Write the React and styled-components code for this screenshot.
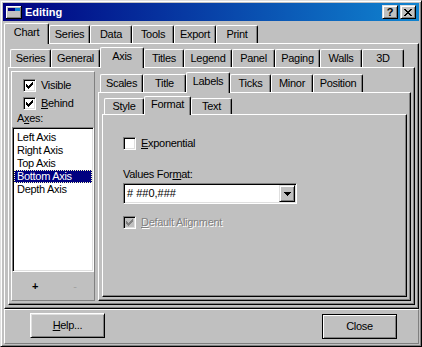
import React from "react";
import styled, { createGlobalStyle, css } from "styled-components";

const FACE = "#c0c0c0";
const LIGHT = "#dfdfdf";
const SHADOW = "#808080";
const DARK = "#000000";
const HI = "#ffffff";

const Global = createGlobalStyle`
  html, body { margin: 0; padding: 0; background: ${FACE}; }
  body {
    font-family: "Liberation Sans", Arial, sans-serif;
    font-size: 11px;
    letter-spacing: -0.3px;
    color: #000;
  }
  #root { width: 422px; height: 347px; }
`;

const Window = styled.div`
  width: 422px;
  height: 347px;
  box-sizing: border-box;
  background: ${FACE};
  border: 1px solid;
  border-color: ${LIGHT} ${DARK} ${DARK} ${LIGHT};
  box-shadow: inset 1px 1px ${HI}, inset -1px -1px ${SHADOW};
  padding: 2px;
  display: flex;
  flex-direction: column;
`;

const Caption = styled.div`
  height: 18px;
  flex: none;
  display: flex;
  align-items: center;
  padding: 0 3px;
  background: linear-gradient(to right, #000080, #1084d0);
  color: #fff;
  font-weight: bold;
  letter-spacing: 0;
  line-height: 18px;
`;

const CaptionTitle = styled.span`
  margin-left: 3px;
`;

const CaptionButtons = styled.div`
  margin-left: auto;
  display: flex;
  gap: 2px;
`;

const CaptionButton = styled.div`
  box-sizing: border-box;
  width: 16px;
  height: 14px;
  background: ${FACE};
  border: 1px solid;
  border-color: ${LIGHT} ${DARK} ${DARK} ${LIGHT};
  box-shadow: inset 1px 1px ${HI}, inset -1px -1px ${SHADOW};
  display: flex;
  align-items: center;
  justify-content: center;
  color: #000;
  font-weight: bold;
  font-size: 11px;
  line-height: 12px;
`;

const Main = styled.div`
  flex: 1;
  min-height: 0;
  margin: 2px 0 0 1px;
  display: flex;
  flex-direction: column;
`;

const TabControl = styled.div`
  flex: 1;
  min-height: 0;
  min-width: 0;
  display: flex;
  flex-direction: column;
  margin-top: ${(p) => p.$mt || 0}px;
`;

const TabStrip = styled.div`
  flex: none;
  height: ${(p) => p.$h}px;
  padding-left: ${(p) => p.$pad}px;
  display: flex;
  align-items: flex-end;
`;

const Tab = styled.div`
  box-sizing: border-box;
  flex: none;
  width: ${(p) => p.$w}px;
  height: ${(p) => p.$h}px;
  background: ${FACE};
  border: 1px solid ${HI};
  border-right-color: ${DARK};
  border-bottom: none;
  border-radius: 2px 2px 0 0;
  box-shadow: inset -1px 0 ${SHADOW};
  text-align: center;
  padding-top: ${(p) => p.$pt}px;
  line-height: 13px;
  white-space: nowrap;
  ${(p) =>
    p.$active &&
    css`
      position: relative;
      z-index: 1;
      height: ${p.$h + 3}px;
      margin-bottom: -1px;
    `}
`;

const Panel = styled.div`
  flex: 1;
  min-height: 0;
  box-sizing: border-box;
  background: ${FACE};
  border: 1px solid;
  border-color: ${HI} ${DARK} ${DARK} ${HI};
  box-shadow: inset -1px -1px ${SHADOW};
  padding: ${(p) => p.$pad};
  display: flex;
  flex-direction: column;
  align-items: ${(p) => p.$align || "stretch"};
`;

const Row = styled.div`
  flex: 1;
  min-height: 0;
  display: flex;
  gap: 3px;
`;

const AxisGroup = styled.div`
  width: 84px;
  flex: none;
  box-sizing: border-box;
  border: 1px solid;
  border-color: ${HI} ${SHADOW} ${SHADOW} ${HI};
  display: flex;
  flex-direction: column;
`;

const GroupTop = styled.div`
  padding: 7px 0 0 11px;
  display: flex;
  flex-direction: column;
  gap: 5px;
`;

const AxesLabel = styled.div`
  line-height: 13px;
  margin: 2px 0 0 5px;
`;

const CheckRow = styled.label`
  display: flex;
  align-items: center;
  gap: 5px;
  height: 13px;
  line-height: 13px;
  margin-top: ${(p) => p.$mt || 0}px;
  color: ${(p) => (p.$disabled ? SHADOW : "#000")};
  text-shadow: ${(p) => (p.$disabled ? `1px 1px ${HI}` : "none")};
  white-space: nowrap;
`;

const Box = styled.span`
  box-sizing: border-box;
  width: 13px;
  height: 13px;
  flex: none;
  padding: 2px;
  background: ${(p) => (p.$disabled ? FACE : "#fff")};
  color: ${(p) => (p.$disabled ? SHADOW : "#000")};
  border: 1px solid;
  border-color: ${SHADOW} ${HI} ${HI} ${SHADOW};
  box-shadow: inset 1px 1px ${DARK}, inset -1px -1px ${LIGHT};
  display: flex;
`;

const U = styled.span`
  text-decoration: underline;
  text-underline-offset: 1px;
`;

const ListBox = styled.div`
  box-sizing: border-box;
  height: 145px;
  flex: none;
  margin-top: 2px;
  background: #fff;
  border: 1px solid;
  border-color: ${SHADOW} ${HI} ${HI} ${SHADOW};
  box-shadow: inset 1px 1px ${DARK}, inset -1px -1px ${LIGHT};
  padding: 3px 1px 0 1px;
`;

const ListItem = styled.div`
  height: 13px;
  line-height: 13px;
  padding-left: 3px;
  white-space: nowrap;
  ${(p) =>
    p.$selected &&
    css`
      background: #000080;
      color: #fff;
      outline: 1px dotted #ffffc0;
      outline-offset: -1px;
    `}
`;

const GroupBottom = styled.div`
  flex: 1;
  display: grid;
  grid-template-columns: 40px 40px;
  align-items: center;
  padding-left: 3px;
  font-size: 11px;
`;

const SmallBtn = styled.span`
  text-align: center;
  color: ${(p) => (p.$disabled ? "#a0a0a0" : "#000")};
  font-weight: ${(p) => (p.$disabled ? "normal" : "bold")};
`;

const FieldLabel = styled.div`
  line-height: 13px;
  margin-top: ${(p) => p.$mt || 0}px;
  white-space: nowrap;
`;

const Combo = styled.div`
  box-sizing: border-box;
  width: 174px;
  height: 21px;
  margin-top: 2px;
  background: #fff;
  border: 1px solid;
  border-color: ${SHADOW} ${HI} ${HI} ${SHADOW};
  box-shadow: inset 1px 1px ${DARK}, inset -1px -1px ${LIGHT};
  padding: 1px;
  display: flex;
`;

const ComboText = styled.div`
  flex: 1;
  padding-left: 2px;
  line-height: 17px;
  letter-spacing: 0;
`;

const ComboButton = styled.div`
  box-sizing: border-box;
  width: 16px;
  height: 17px;
  background: ${FACE};
  border: 1px solid;
  border-color: ${LIGHT} ${DARK} ${DARK} ${LIGHT};
  box-shadow: inset 1px 1px ${HI}, inset -1px -1px ${SHADOW};
  display: flex;
  align-items: center;
  justify-content: center;
`;

const BottomBar = styled.div`
  flex: none;
  height: 35px;
  box-sizing: border-box;
  border: 1px solid;
  border-color: ${HI} ${SHADOW} ${SHADOW} ${HI};
  padding: 3px 21px 0 25px;
  display: flex;
  justify-content: space-between;
  align-items: flex-start;
`;

const Button = styled.button`
  box-sizing: border-box;
  width: 75px;
  height: 25px;
  margin-top: ${(p) => (p.$default ? 1 : 0)}px;
  padding: 0;
  background: ${FACE};
  font: inherit;
  letter-spacing: inherit;
  color: #000;
  line-height: 13px;
  border: 1px solid;
  border-color: ${HI} ${DARK} ${DARK} ${HI};
  box-shadow: inset 1px 1px ${LIGHT}, inset -1px -1px ${SHADOW};
  ${(p) =>
    p.$default &&
    css`
      border-color: ${DARK};
      box-shadow: inset 1px 1px ${HI}, inset -1px -1px ${SHADOW};
    `}
`;

const Check = () => (
  <svg width="7" height="7" viewBox="0 0 7 7" shapeRendering="crispEdges">
    <path
      d="M0 2h1v3H0z M1 3h1v3H1z M2 4h1v3H2z M3 3h1v3H3z M4 2h1v3H4z M5 1h1v3H5z M6 0h1v3H6z"
      fill="currentColor"
    />
  </svg>
);

const CheckBox = ({ checked, disabled }) => (
  <Box $disabled={disabled}>{checked && <Check />}</Box>
);

const WinIcon = () => (
  <svg width="16" height="13" viewBox="0 0 16 13" shapeRendering="crispEdges">
    <rect x="0" y="0" width="16" height="13" fill="#000" />
    <rect x="0" y="0" width="15" height="12" fill="#fff" />
    <rect x="1" y="1" width="14" height="11" fill="#808080" />
    <rect x="1" y="1" width="13" height="10" fill="#c0c0c0" />
    <rect x="2" y="2" width="12" height="3" fill="#000080" />
    <rect x="9" y="2" width="5" height="3" fill="#1084d0" />
  </svg>
);

const CloseGlyph = () => (
  <svg width="8" height="7" viewBox="0 0 8 7" shapeRendering="crispEdges">
    <path
      d="M0 0h2v1H0z M6 0h2v1H6z M1 1h2v1H1z M5 1h2v1H5z M2 2h4v1H2z M3 3h2v1H3z M2 4h4v1H2z M1 5h2v1H1z M5 5h2v1H5z M0 6h2v1H0z M6 6h2v1H6z"
      fill="#000"
    />
  </svg>
);

const DownArrow = () => (
  <svg width="7" height="4" viewBox="0 0 7 4" shapeRendering="crispEdges">
    <path d="M0 0h7v1H0z M1 1h5v1H1z M2 2h3v1H2z M3 3h1v1H3z" fill="#000" />
  </svg>
);

const Tabs = ({ items, active, h, pt, pad }) => (
  <TabStrip $h={h + 2} $pad={pad}>
    {items.map(([label, w]) => (
      <Tab key={label} $w={w} $h={h} $pt={pt} $active={label === active}>
        {label}
      </Tab>
    ))}
  </TabStrip>
);

const level1 = [
  ["Chart", 45],
  ["Series", 41],
  ["Data", 42],
  ["Tools", 42],
  ["Export", 42],
  ["Print", 42],
];
const level2 = [
  ["Series", 41],
  ["General", 49],
  ["Axis", 44],
  ["Titles", 40],
  ["Legend", 48],
  ["Panel", 43],
  ["Paging", 45],
  ["Walls", 42],
  ["3D", 42],
];
const level3 = [
  ["Scales", 43],
  ["Title", 43],
  ["Labels", 44],
  ["Ticks", 41],
  ["Minor", 42],
  ["Position", 50],
];
const level4 = [
  ["Style", 40],
  ["Format", 47],
  ["Text", 41],
];

const axes = ["Left Axis", "Right Axis", "Top Axis", "Bottom Axis", "Depth Axis"];

export default function App() {
  return (
    <>
      <Global />
      <Window>
        <Caption>
          <WinIcon />
          <CaptionTitle>Editing</CaptionTitle>
          <CaptionButtons>
            <CaptionButton>?</CaptionButton>
            <CaptionButton>
              <CloseGlyph />
            </CaptionButton>
          </CaptionButtons>
        </Caption>
        <Main>
          <TabControl>
            <Tabs items={level1} active="Chart" h={18} pt={2} pad={0} />
            <Panel $pad="3px">
              <TabControl>
                <Tabs items={level2} active="Axis" h={18} pt={2} pad={2} />
                <Panel $pad="3px 3px 3px 2px">
                  <Row>
                    <AxisGroup>
                      <GroupTop>
                        <CheckRow>
                          <CheckBox checked />
                          <span>Visible</span>
                        </CheckRow>
                        <CheckRow>
                          <CheckBox checked />
                          <span>
                            <U>B</U>ehind
                          </span>
                        </CheckRow>
                      </GroupTop>
                      <AxesLabel>
                        A<U>x</U>es:
                      </AxesLabel>
                      <ListBox>
                        {axes.map((a) => (
                          <ListItem key={a} $selected={a === "Bottom Axis"}>
                            {a}
                          </ListItem>
                        ))}
                      </ListBox>
                      <GroupBottom>
                        <SmallBtn>+</SmallBtn>
                        <SmallBtn $disabled>-</SmallBtn>
                      </GroupBottom>
                    </AxisGroup>
                    <TabControl $mt={1}>
                      <Tabs items={level3} active="Labels" h={18} pt={2} pad={2} />
                      <Panel $pad="3px">
                        <TabControl>
                          <Tabs items={level4} active="Format" h={16} pt={1} pad={2} />
                          <Panel $pad="22px 0 0 20px" $align="flex-start">
                            <CheckRow>
                              <CheckBox />
                              <span>
                                <U>E</U>xponential
                              </span>
                            </CheckRow>
                            <FieldLabel $mt={18}>
                              Values For<U>m</U>at:
                            </FieldLabel>
                            <Combo>
                              <ComboText># ##0,###</ComboText>
                              <ComboButton>
                                <DownArrow />
                              </ComboButton>
                            </Combo>
                            <CheckRow $mt={12} $disabled>
                              <CheckBox checked disabled />
                              <span>
                                <U>D</U>efault Alignment
                              </span>
                            </CheckRow>
                          </Panel>
                        </TabControl>
                      </Panel>
                    </TabControl>
                  </Row>
                </Panel>
              </TabControl>
            </Panel>
          </TabControl>
          <BottomBar>
            <Button>
              <U>H</U>elp...
            </Button>
            <Button $default>Close</Button>
          </BottomBar>
        </Main>
      </Window>
    </>
  );
}
